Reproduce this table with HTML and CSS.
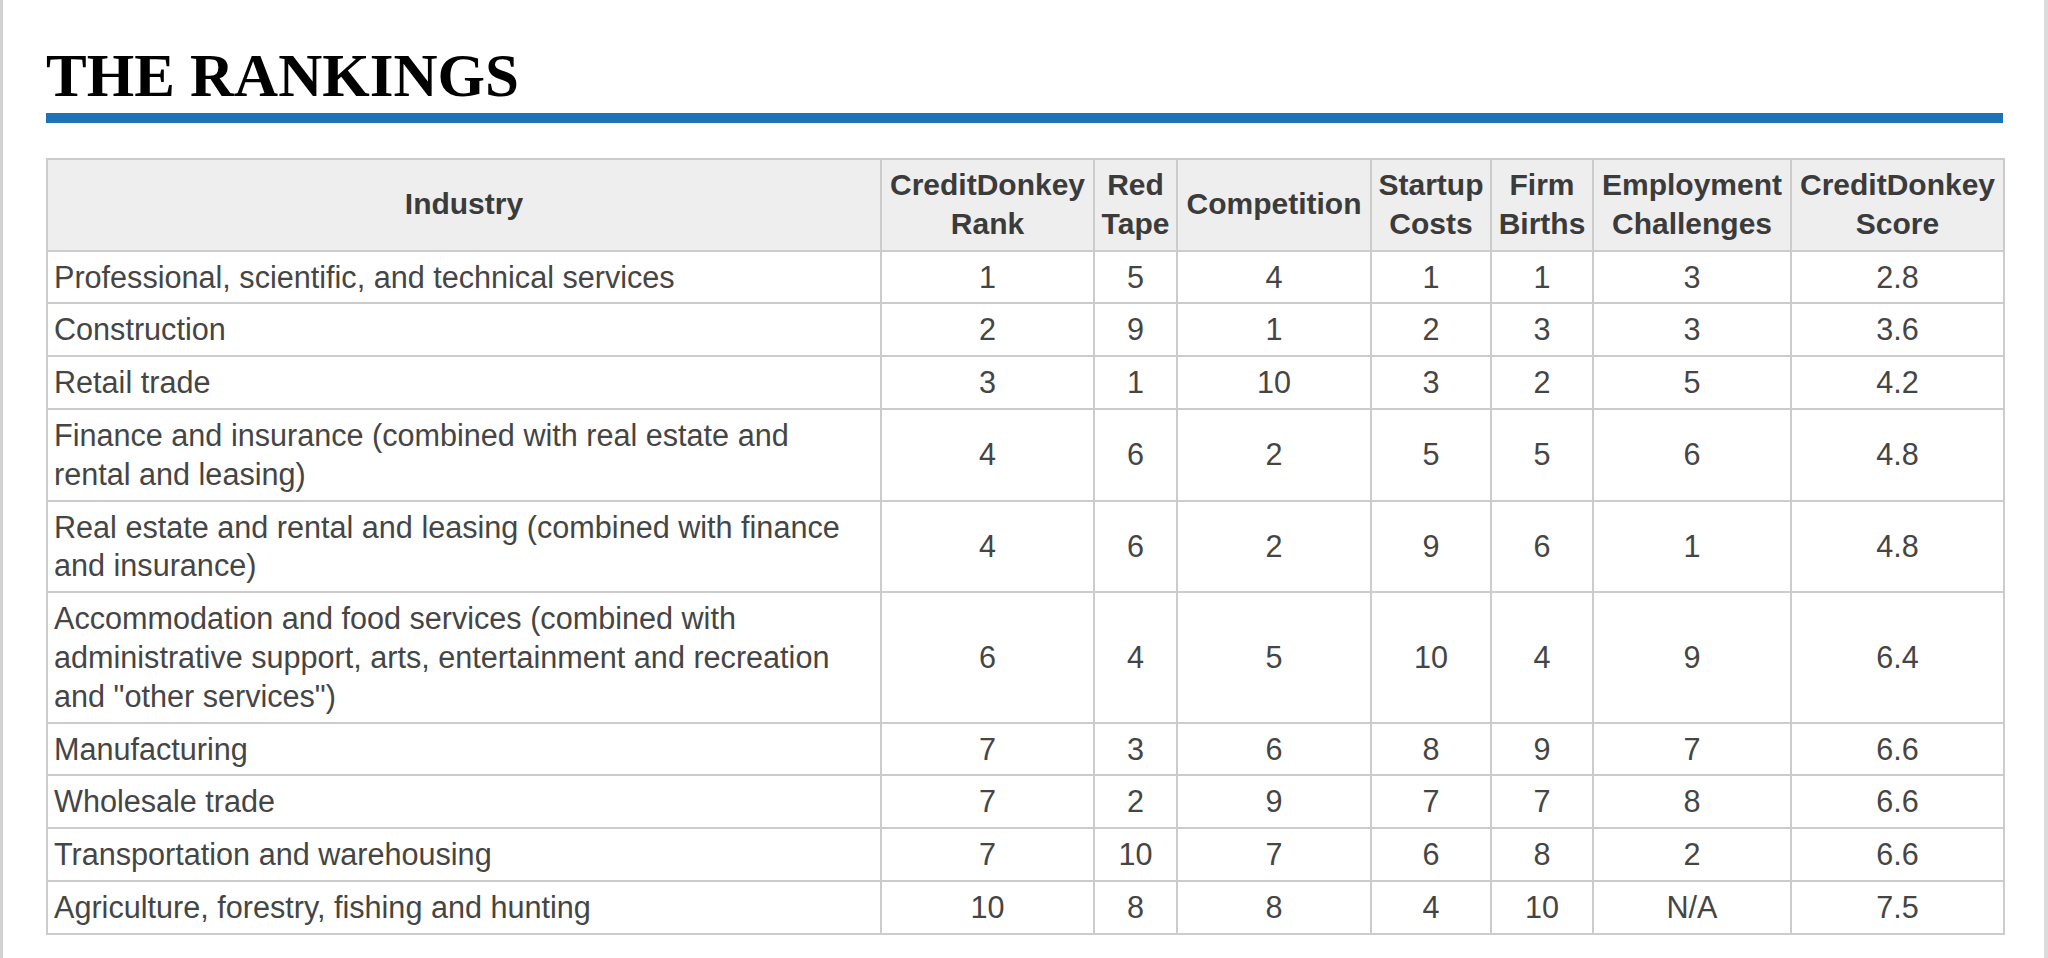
FILE: index.html
```html
<!DOCTYPE html>
<html lang="en">
<head>
<meta charset="utf-8">
<title>The Rankings</title>
<link rel="stylesheet" href="styles.css">
</head>
<body>
<div class="page">
  <h1 class="title">THE RANKINGS</h1>
  <table class="rankings">
    <colgroup>
      <col class="c-industry">
      <col class="c-rank">
      <col class="c-red">
      <col class="c-comp">
      <col class="c-startup">
      <col class="c-firm">
      <col class="c-emp">
      <col class="c-score">
    </colgroup>
    <thead>
      <tr>
        <th>Industry</th>
        <th>CreditDonkey Rank</th>
        <th>Red Tape</th>
        <th>Competition</th>
        <th>Startup Costs</th>
        <th>Firm Births</th>
        <th>Employment Challenges</th>
        <th>CreditDonkey Score</th>
      </tr>
    </thead>
    <tbody>
      <tr><td class="name">Professional, scientific, and technical services</td><td>1</td><td>5</td><td>4</td><td>1</td><td>1</td><td>3</td><td>2.8</td></tr>
      <tr><td class="name">Construction</td><td>2</td><td>9</td><td>1</td><td>2</td><td>3</td><td>3</td><td>3.6</td></tr>
      <tr><td class="name">Retail trade</td><td>3</td><td>1</td><td>10</td><td>3</td><td>2</td><td>5</td><td>4.2</td></tr>
      <tr><td class="name">Finance and insurance (combined with real estate and rental and leasing)</td><td>4</td><td>6</td><td>2</td><td>5</td><td>5</td><td>6</td><td>4.8</td></tr>
      <tr><td class="name">Real estate and rental and leasing (combined with finance and insurance)</td><td>4</td><td>6</td><td>2</td><td>9</td><td>6</td><td>1</td><td>4.8</td></tr>
      <tr><td class="name">Accommodation and food services (combined with administrative support, arts, entertainment and recreation and "other services")</td><td>6</td><td>4</td><td>5</td><td>10</td><td>4</td><td>9</td><td>6.4</td></tr>
      <tr><td class="name">Manufacturing</td><td>7</td><td>3</td><td>6</td><td>8</td><td>9</td><td>7</td><td>6.6</td></tr>
      <tr><td class="name">Wholesale trade</td><td>7</td><td>2</td><td>9</td><td>7</td><td>7</td><td>8</td><td>6.6</td></tr>
      <tr><td class="name">Transportation and warehousing</td><td>7</td><td>10</td><td>7</td><td>6</td><td>8</td><td>2</td><td>6.6</td></tr>
      <tr><td class="name">Agriculture, forestry, fishing and hunting</td><td>10</td><td>8</td><td>8</td><td>4</td><td>10</td><td>N/A</td><td>7.5</td></tr>
    </tbody>
  </table>
</div>
</body>
</html>
```
FILE: styles.css
```css
html, body {
  margin: 0;
  padding: 0;
  background: #ffffff;
}

.page {
  box-sizing: border-box;
  min-height: 958px;
  border-left: 3px solid #d2d2d2;
  border-right: 4px solid #dcdcdc;
  padding: 45px 41px 0 43px;
}

.title {
  margin: 0 0 35px 0;
  padding: 0 0 7px 0;
  font-family: "Liberation Serif", "Times New Roman", serif;
  font-weight: bold;
  font-size: 61px;
  line-height: 61px;
  color: #000000;
  border-bottom: 10px solid #1e73b8;
}

.rankings {
  width: 1957px;
  table-layout: fixed;
  border-collapse: collapse;
  font-family: "Liberation Sans", Arial, sans-serif;
  font-size: 30px;
  line-height: 38.8px;
  color: #454545;
}

.c-industry { width: 834px; }
.c-rank { width: 213px; }
.c-red { width: 83px; }
.c-comp { width: 194px; }
.c-startup { width: 120px; }
.c-firm { width: 102px; }
.c-emp { width: 198px; }
.c-score { width: 213px; }

.rankings th,
.rankings td {
  border: 2px solid #cccccc;
  padding: 6px 6px;
  text-align: center;
  vertical-align: middle;
}

.rankings th {
  background: #eeeeee;
  color: #3b3b3b;
  font-weight: bold;
}

.rankings td {
  font-size: 30.6px;
}

.rankings td.name {
  text-align: left;
  padding-right: 22px;
}
```
